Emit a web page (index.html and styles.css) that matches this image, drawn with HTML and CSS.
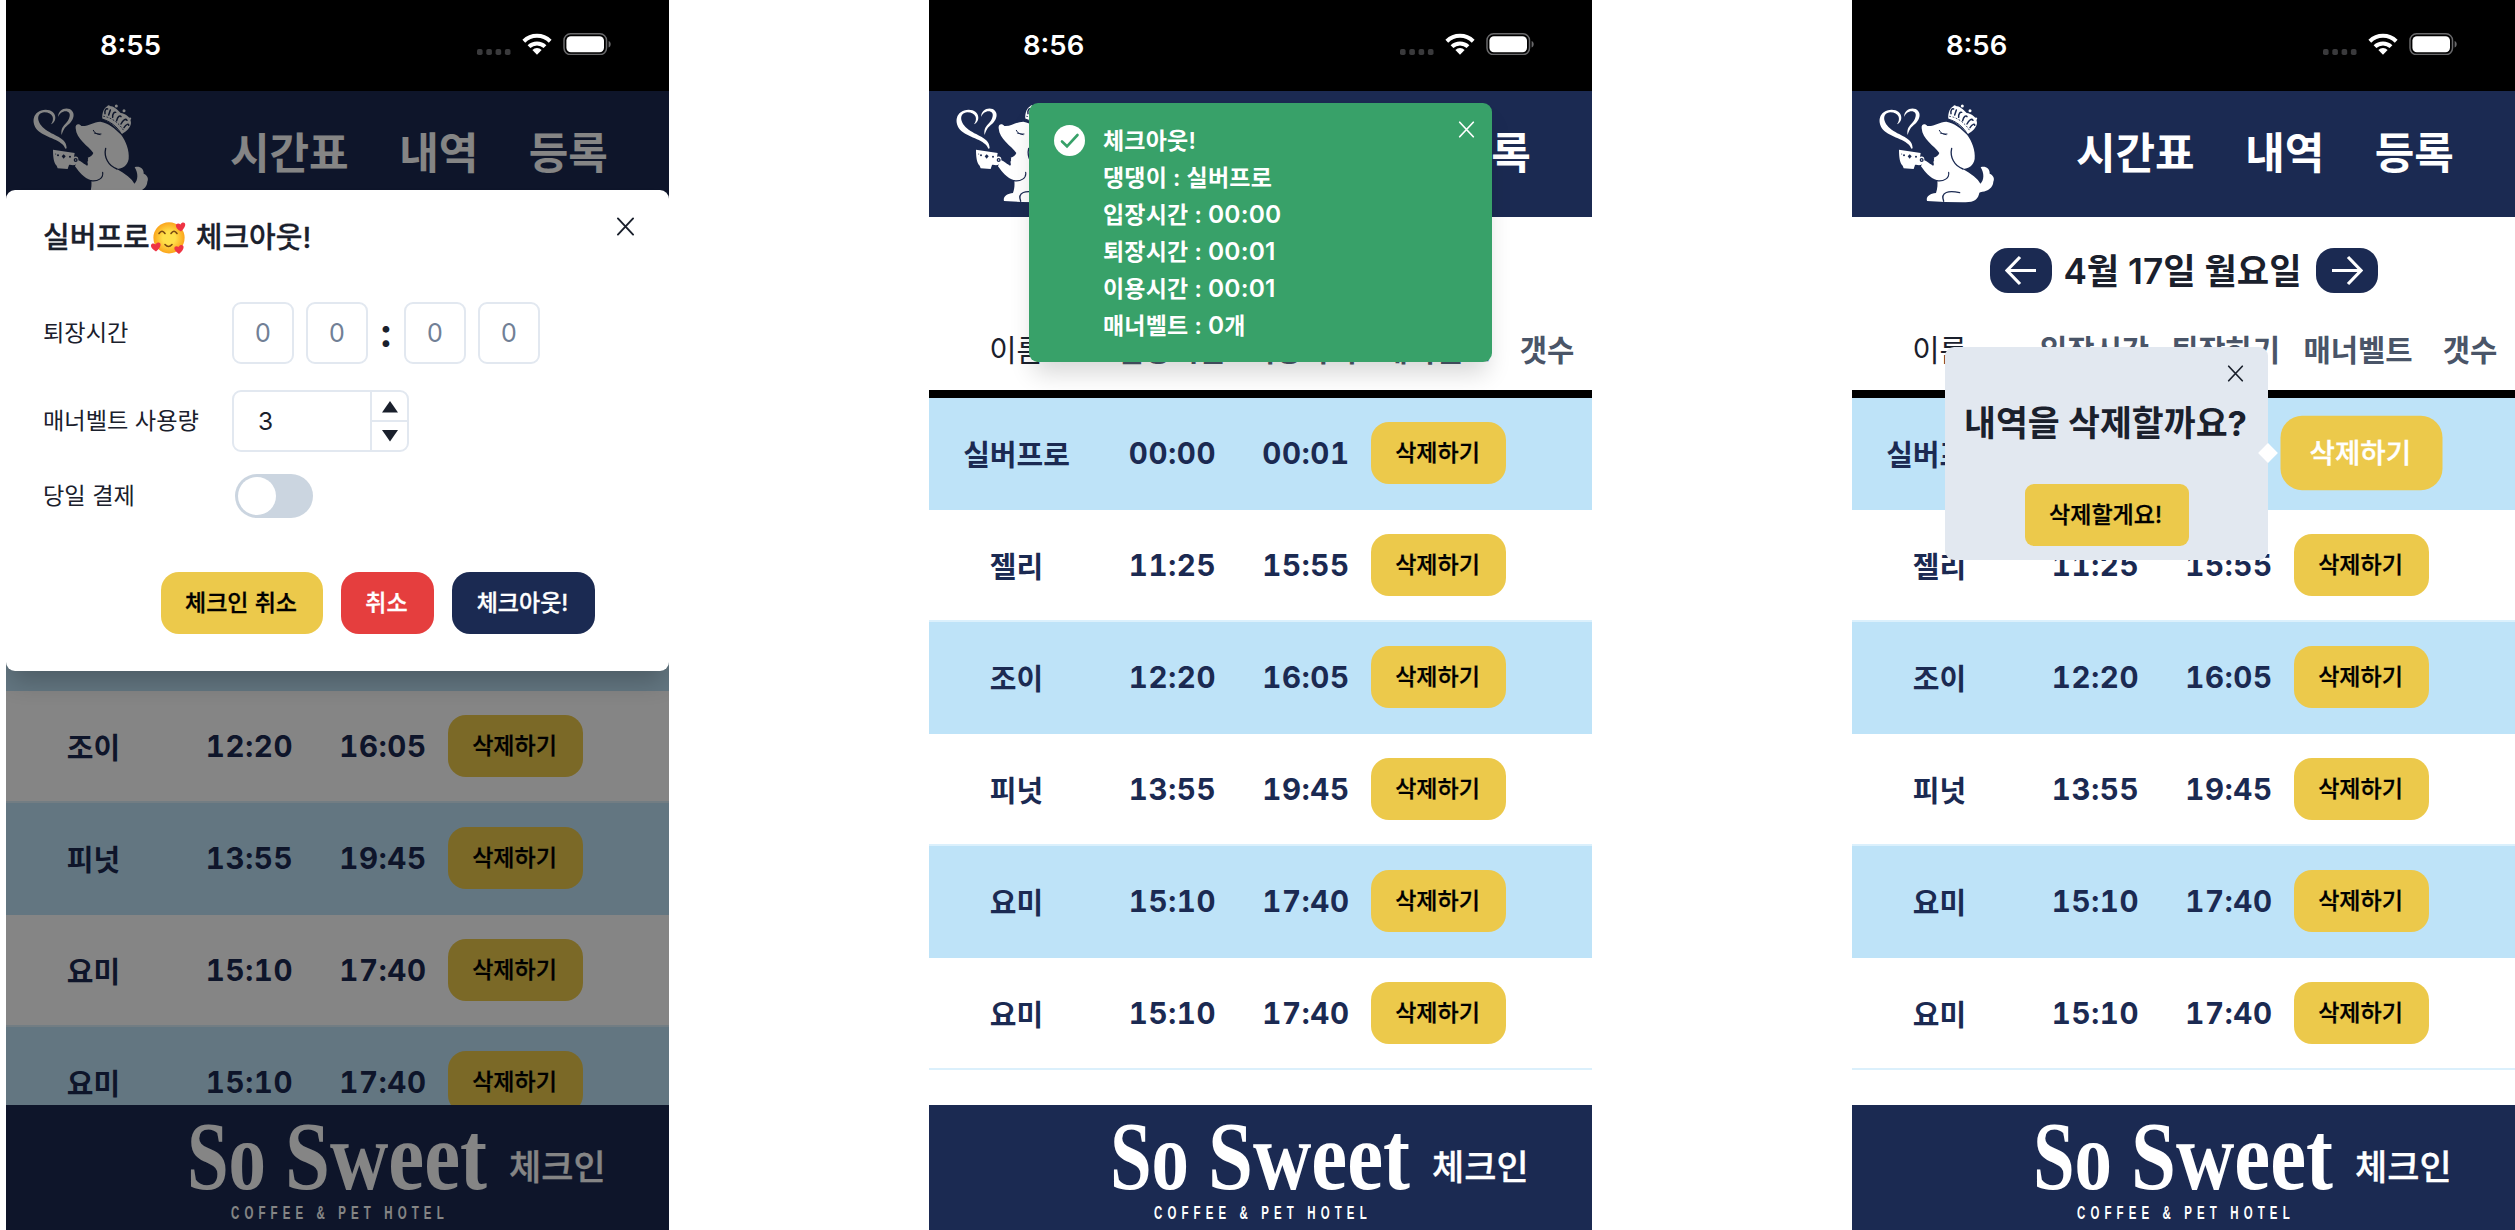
FILE: index.html
```html
<!DOCTYPE html>
<html lang="ko">
<head>
<meta charset="utf-8">
<title>So Sweet</title>
<link rel="stylesheet" href="styles.css">
</head>
<body>
<svg class="defs" aria-hidden="true">
  <symbol id="status" viewBox="0 0 140 22">
    <g fill="#3a3a3c"><rect x="0" y="16" width="5.6" height="6" rx="1.8"/><rect x="9.3" y="16" width="5.6" height="6" rx="1.8"/><rect x="18.6" y="16" width="5.6" height="6" rx="1.8"/><rect x="27.9" y="16" width="5.6" height="6" rx="1.8"/></g>
    <g fill="none" stroke="#fff" stroke-width="4"><path d="M46.8 8.2a19 19 0 0 1 26.4 0"/><path d="M52 13.6a11.6 11.6 0 0 1 16 0"/></g>
    <path d="M60 21.8l-4.6-4.9a6.8 6.8 0 0 1 9.2 0z" fill="#fff"/>
    <rect x="87" y=".8" width="42.5" height="20.8" rx="6.5" fill="none" stroke="#69696b" stroke-width="1.5"/>
    <rect x="89.4" y="3.2" width="37.6" height="16" rx="4.5" fill="#fff"/>
    <path d="M131.6 8c2.8 1 2.8 5.600 0 6.600z" fill="#69696b"/>
  </symbol>
  <symbol id="dog" viewBox="0 0 420 360">
    <g fill="#fff">
      <path d="M78 100C98 92 97 57 62 56C22 57 16 97 40 120C66 142 112 146 121 173L125 172C125 140 92 137 62 116C34 96 32 66 58 64C84 64 90 84 78 100Z"/>
      <path d="M99 78C99 58 118 48 134 54C156 66 144 92 126 104C116 112 113 122 110 132C107 118 112 108 120 100C134 86 140 66 128 62C116 58 104 66 99 78Z"/>
      <path d="M84 176L149 186L147 198C162 192 164 210 154 219C146 226 138 220 132 222L128 234L98 232L95 224C86 216 84 196 84 176Z"/>
      <path d="M152 112C150 98 163 97 169 105C190 107 205 92 226 92C250 96 270 112 289 132C302 150 314 178 311 204C308 224 292 234 275 234C300 248 322 264 328 278C340 268 340 246 329 229C342 224 357 232 356 248C366 252 372 262 367 272C366 290 350 300 334 302C326 304 325 304 324 310C318 332 302 334 274 334L222 333L168 330C164 316 178 308 195 306C200 292 200 280 199 268C176 262 162 242 150 226L157 208C166 208 172 216 186 224C193 220 183 212 190 209C186 206 192 204 188 200C196 198 202 194 205 186C190 164 154 146 152 112Z"/>
      <path d="M232 84C230 66 238 48 248 46C262 42 276 54 287 66C300 68 318 78 318 96C316 112 304 120 290 130C276 110 254 92 232 84Z"/>
      <circle cx="274" cy="45" r="4.500"/><circle cx="297" cy="59" r="4.500"/><circle cx="315" cy="83" r="3.500"/><circle cx="251" cy="46" r="3.500"/>
    </g>
    <g fill="none" stroke="#1b2a52" stroke-linecap="round">
      <path d="M228 83C256 90 278 108 291 132" stroke-width="3"/>
      <path d="M236 76C262 80 284 98 298 122" stroke-width="2.500" stroke-dasharray="3 7"/>
      <path d="M240 68C238 58 243 52 248 54M251 72L256 57M263 79C262 68 268 62 272 64M275 89C278 76 285 72 288 77M288 99C294 86 302 82 306 88M297 110C304 98 312 98 311 103" stroke-width="4.500"/>
      <path d="M242 172C236 198 250 225 276 234" stroke-width="4"/>
      <path d="M205 118C210 128 218 130 228 129M208 126L225 131" stroke-width="3"/>
      <path d="M198 269C218 272 236 262 233 244" stroke-width="3.500"/>
      <path d="M218 331C207 302 234 298 266 305" stroke-width="4"/>
      <circle cx="152" cy="207" r="4" stroke-width="4"/>
    </g>
    <g fill="#1b2a52"><circle cx="99" cy="193" r="3"/><path d="M116 190l6 6-6 7-6-7z"/><circle cx="135" cy="197" r="3"/><circle cx="92" cy="189" r="1.500"/></g>
  </symbol>
  <symbol id="close" viewBox="0 0 20 20"><path d="M2 1.500L18 18.500M18 1.500L2 18.500" fill="none" stroke="currentColor" stroke-width="2" stroke-linecap="round"/></symbol>
  <symbol id="arrow" viewBox="0 0 32 32"><path d="M31 15.500H2M15 2L2 15.500L15 29" fill="none" stroke="#fff" stroke-width="3.200"/></symbol>
  <symbol id="brand" viewBox="0 0 310 110">
    <g fill="#fff"><text class="brand-name" x="4" y="78" textLength="79" lengthAdjust="spacingAndGlyphs">So</text>
    <text class="brand-name" x="102" y="78" textLength="202" lengthAdjust="spacingAndGlyphs">Sweet</text>
    <g transform="translate(48 108) scale(.62 1)"><text class="brand-sub" x="0" y="0" textLength="343" lengthAdjust="spacing">COFFEE &amp; PET HOTEL</text></g></g>
  </symbol>
</svg>

<div class="board">
  <section class="phone">
    <div class="status"><span>8:55</span><svg class="status-icons"><use href="#status"/></svg></div>
    <header class="top"><svg class="dog"><use href="#dog"/></svg><nav><b>시간표</b><b>내역</b><b>등록</b></nav></header>
    <main class="list scrolled">
      <div class="row even"></div>
      <div class="row"><span>조이</span><time>12:20</time><time>16:05</time><button>삭제하기</button></div>
      <div class="row even"><span>피넛</span><time>13:55</time><time>19:45</time><button>삭제하기</button></div>
      <div class="row"><span>요미</span><time>15:10</time><time>17:40</time><button>삭제하기</button></div>
      <div class="row even"><span>요미</span><time>15:10</time><time>17:40</time><button>삭제하기</button></div>
    </main>
    <footer class="bottom"><svg class="brand"><use href="#brand"/></svg><span>체크인</span></footer>
    <div class="dim"></div>
    <div class="modal">
      <div class="modal-head">
        <h2>실버프로<svg class="emoji" viewBox="0 0 36 32"><defs><radialGradient id="face"><stop offset=".4" stop-color="#ffe04a"/><stop offset="1" stop-color="#fba51c"/></radialGradient></defs><circle cx="18" cy="15.800" r="15.600" fill="url(#face)"/><g fill="none" stroke="#7a4a12" stroke-width="1.600" stroke-linecap="round"><path d="M8 11.500q3-4.500 6 0M20 11.500q3-4.500 6 0M14 22.500q3.500 4 7 0"/></g><g fill="#ee3444"><path d="M30 9.500c-9-5-4-10.500-.5-7 2.500-4.500 9-.5.500 7z"/><path d="M5 29.500c-9-5-4-10.500-.5-7 3-4.500 9.500-.5.500 7z"/><path d="M28 32c-8-5-4-9.500-.5-7 3-4.500 9.500-.5.500 7z"/></g></svg><i>체크아웃!</i></h2>
        <svg class="x x-modal"><use href="#close"/></svg>
      </div>
      <div class="field time-field"><label>퇴장시간</label><span class="digit">0</span><span class="digit">0</span><b class="colon">:</b><span class="digit">0</span><span class="digit">0</span></div>
      <div class="field count-field"><label>매너벨트 사용량</label><div class="number"><span>3</span><div class="steps"><svg viewBox="0 0 16 12"><path d="M8 0l8 11.500H0z"/></svg><svg viewBox="0 0 16 12"><path d="M0 0h16L8 11.500z"/></svg></div></div></div>
      <div class="field pay-field"><label>당일 결제</label><div class="toggle"><i></i></div></div>
      <div class="actions"><button class="w1">체크인 취소</button><button class="w2 red">취소</button><button class="w3 navy">체크아웃!</button></div>
    </div>
  </section>

  <section class="phone">
    <div class="status"><span>8:56</span><svg class="status-icons"><use href="#status"/></svg></div>
    <header class="top"><svg class="dog"><use href="#dog"/></svg><nav><b>시간표</b><b>내역</b><b>등록</b></nav></header>
    <main class="list">
      <div class="date"></div>
      <div class="thead"><span>이름</span><b>입장시간</b><b>퇴장하기</b><b>매너벨트</b><b>갯수</b></div>
      <div class="row even"><span>실버프로</span><time>00:00</time><time>00:01</time><button>삭제하기</button></div>
      <div class="row"><span>젤리</span><time>11:25</time><time>15:55</time><button>삭제하기</button></div>
      <div class="row even"><span>조이</span><time>12:20</time><time>16:05</time><button>삭제하기</button></div>
      <div class="row"><span>피넛</span><time>13:55</time><time>19:45</time><button>삭제하기</button></div>
      <div class="row even"><span>요미</span><time>15:10</time><time>17:40</time><button>삭제하기</button></div>
      <div class="row"><span>요미</span><time>15:10</time><time>17:40</time><button>삭제하기</button></div>
    </main>
    <footer class="bottom"><svg class="brand"><use href="#brand"/></svg><span>체크인</span></footer>
    <div class="toast">
      <svg class="check" viewBox="0 0 31 31"><circle cx="15.500" cy="15.500" r="15.500" fill="#fff"/><path d="M8 16.500l5 4.800L23.500 10" fill="none" stroke="#38a169" stroke-width="2.600" stroke-linecap="round"/></svg>
      <ul><li>체크아웃!</li><li>댕댕이 : 실버프로</li><li>입장시간 : <em>00:00</em></li><li>퇴장시간 : <em>00:01</em></li><li>이용시간 : <em>00:01</em></li><li>매너벨트 : <em>0</em>개</li></ul>
      <svg class="x x-toast"><use href="#close"/></svg>
    </div>
  </section>

  <section class="phone">
    <div class="status"><span>8:56</span><svg class="status-icons"><use href="#status"/></svg></div>
    <header class="top"><svg class="dog"><use href="#dog"/></svg><nav><b>시간표</b><b>내역</b><b>등록</b></nav></header>
    <main class="list">
      <div class="date"><div class="step"><svg><use href="#arrow"/></svg></div><b>4월 17일 월요일</b><div class="step next"><svg><use href="#arrow"/></svg></div></div>
      <div class="thead"><span>이름</span><b>입장시간</b><b>퇴장하기</b><b>매너벨트</b><b>갯수</b></div>
      <div class="row even"><span>실버프로</span><time>00:00</time><time></time><button class="active">삭제하기</button></div>
      <div class="row"><span>젤리</span><time>11:25</time><time>15:55</time><button>삭제하기</button></div>
      <div class="row even"><span>조이</span><time>12:20</time><time>16:05</time><button>삭제하기</button></div>
      <div class="row"><span>피넛</span><time>13:55</time><time>19:45</time><button>삭제하기</button></div>
      <div class="row even"><span>요미</span><time>15:10</time><time>17:40</time><button>삭제하기</button></div>
      <div class="row"><span>요미</span><time>15:10</time><time>17:40</time><button>삭제하기</button></div>
    </main>
    <footer class="bottom"><svg class="brand"><use href="#brand"/></svg><span>체크인</span></footer>
    <div class="popover">
      <svg class="x x-pop"><use href="#close"/></svg>
      <h2>내역을 삭제할까요?</h2>
      <button>삭제할게요!</button>
      <i class="tip"></i>
    </div>
  </section>
</div>
</body>
</html>
```

FILE: styles.css
```css
* { box-sizing: border-box; margin: 0; padding: 0; }
body { background: #fff; color: #1a202c; font-family: Inter, "Noto Sans CJK KR", sans-serif; width: 2515px; height: 1230px; overflow: hidden; }
.defs { position: absolute; width: 0; height: 0; }
.board { display: flex; gap: 260px; padding-left: 6px; }
.phone { position: relative; width: 663px; height: 1230px; flex: none; display: flex; flex-direction: column; overflow: hidden; white-space: nowrap; }
i, em { font-style: normal; }

.status { height: 91px; flex: none; background: #000; color: #fff; display: flex; justify-content: space-between; padding: 28px 52px 0 94px; font-size: 27.500px; line-height: 34px; font-weight: 600; }
.status-icons { width: 140px; height: 22px; margin-top: 5px; }

.top { height: 126px; flex: none; background: #1b2a52; display: flex; }
.dog { width: 140px; height: 120px; margin-left: 19px; margin-top: 0; flex: none; }
nav { display: flex; gap: 50.500px; margin-left: 65px; color: #fff; font-size: 43px; line-height: 124px; font-weight: 600; }
nav b { font-weight: inherit; }

.list { flex: 1; overflow: hidden; }
.scrolled { padding-top: 362px; }
.date { height: 107px; display: flex; align-items: center; justify-content: center; gap: 12px; }
.date b { font-size: 35.200px; font-weight: 600; line-height: 44px; width: 240px; text-align: center; text-indent: -2px; }
.step { width: 62px; height: 45px; border-radius: 18px; background: #1b2a52; display: flex; align-items: center; justify-content: center; }
.step svg { width: 32px; height: 32px; }
.next svg { transform: scaleX(-1); }
.thead { height: 74px; border-bottom: 8px solid #000; display: grid; grid-template-columns: 175px 135px 127px 138px 86px; font-size: 29.700px; line-height: 53px; text-align: center; }
.thead b { color: #4a5568; font-weight: 600; }
.row { height: 112px; border-bottom: 2px solid #dbf0fc; display: grid; grid-template-columns: 175px 138px 129px 135px; align-items: center; text-align: center; color: #1b2a52; font-size: 29px; font-weight: 600; }
.row time { font-size: 29.500px; font-weight: 700; letter-spacing: .7px; text-indent: -1px; font-variant-numeric: tabular-nums; }
.even { background: #bee3f8; border-bottom-color: #bee3f8; }
button { border: 0; background: #ecc94b; color: #000; font: 500 23px/32px Inter, "Noto Sans CJK KR", sans-serif; -webkit-text-stroke: .3px; height: 62px; border-radius: 18px; text-align: center; text-indent: -2px; }
.row button { width: 135px; }
.row .active { transform: scale(1.2); color: #fff; }

.bottom { height: 125px; flex: none; background: #1b2a52; color: #fff; display: flex; font-size: 35px; line-height: 124px; font-weight: 500; }
.bottom span { -webkit-text-stroke: .3px; }
.brand { width: 310px; height: 110px; margin: 6px 16px 0 177px; flex: none; }
.brand-name { font: bold 97px "Liberation Serif", serif; }
.brand-sub { font: bold 18.500px "Liberation Sans", sans-serif; }

.dim { position: absolute; inset: 91px 0 0; background: rgba(0,0,0,.48); }
.modal { position: absolute; left: 0; top: 190px; width: 663px; height: 481px; background: #fff; border-radius: 9px; box-shadow: 0 16px 24px -6px rgba(0,0,0,.22); padding: 22px 34px 0 37px; }
.modal-head { display: flex; justify-content: space-between; height: 90px; }
.modal h2 { display: flex; font-size: 29px; line-height: 51px; font-weight: 500; -webkit-text-stroke: .3px; }
.emoji { width: 36px; height: 32px; margin: 10px 9px 0 1px; }
.x-modal { width: 19px; height: 19px; margin-top: 5px; }
.field { display: flex; align-items: center; height: 62px; font-size: 23.200px; }
.field label { width: 189px; flex: none; line-height: 30px; margin-top: -1px; }
.digit { width: 62px; height: 62px; border: 2px solid #e2e8f0; border-radius: 9px; color: #718096; font-size: 25px; line-height: 59px; text-align: center; margin-right: 12px; }
.colon { width: 24px; font-size: 40px; line-height: 40px; text-align: center; margin: 0 6px 0 -6px; }
.count-field { margin-top: 26px; }
.number { width: 177px; height: 62px; border: 2px solid #e2e8f0; border-radius: 9px; display: flex; line-height: 58px; font-size: 24.500px; }
.number span { width: 136px; padding-left: 24px; }
.steps { flex: 1; border-left: 2px solid #e2e8f0; display: grid; grid-template-rows: 1fr 1fr; place-items: center; background: linear-gradient(#e2e8f0, #e2e8f0) 0 50% / 100% 2px no-repeat; }
.steps svg { width: 16px; height: 12px; fill: #1a202c; }
.pay-field { margin-top: 13px; }
.toggle { width: 78px; height: 44px; border-radius: 22px; background: #cbd5e0; margin-left: 3px; padding: 3px; }
.toggle i { display: block; width: 38px; height: 38px; border-radius: 50%; background: #fff; }
.actions { display: flex; gap: 18px; margin: 45px 0 0 118px; }
.w1 { width: 162px; } .w2 { width: 93px; } .w3 { width: 143px; }
.red { background: #e53e3e; color: #fff; }
.navy { background: #1b2a52; color: #fff; }

.toast { position: absolute; left: 100px; top: 103px; width: 463px; height: 259px; background: #38a169; color: #fff; border-radius: 9px; box-shadow: 0 16px 24px -5px rgba(0,0,0,.16); display: flex; padding: 18px 17px 0 25px; }
.check { width: 31px; height: 31px; margin: 4px 18px 0 0; }
.toast ul { flex: 1; list-style: none; font-size: 23px; line-height: 37px; font-weight: 600; letter-spacing: .2px; margin-top: 2px; }
.toast li { height: 37px; }
.toast em { font-size: 24.500px; line-height: 0; }
.x-toast { width: 17px; height: 17px; }
.popover { position: absolute; left: 93px; top: 347px; width: 323px; height: 213px; background: #e2e8f0; border-radius: 9px; display: flex; flex-direction: column; align-items: center; }
.x-pop { width: 17px; height: 17px; margin: 18px 24px 0 0; align-self: flex-end; }
.popover h2 { font-size: 34.700px; line-height: 50px; font-weight: 700; margin-top: 16px; text-indent: -2px; }
.popover button { width: 164px; border-radius: 9px; margin-top: 36px; }
.tip { position: absolute; right: -7px; top: 99px; width: 14px; height: 14px; background: #fff; transform: rotate(45deg); }
```
